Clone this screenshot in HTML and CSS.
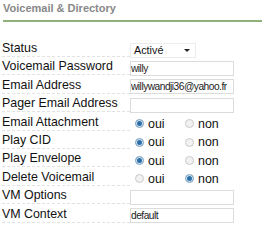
FILE: index.html
```html
<!DOCTYPE html>
<html lang="fr">
<head>
    <meta charset="UTF-8">
    <title>Voicemail &amp; Directory</title>
    <link rel="stylesheet" href="styles.css">
</head>
<body>

    <h3 class="section-title">Voicemail &amp; Directory</h3>

    <form class="vm-form">
        <div class="row">
            <label class="field-label">Status</label>
            <div class="field">
                <div class="select-box">
                    <span>Activé</span>
                    <span class="caret"></span>
                </div>
            </div>
        </div>
        <div class="row">
            <label class="field-label">Voicemail Password</label>
            <div class="field"><input type="text" class="text-input" value="willy"></div>
        </div>
        <div class="row">
            <label class="field-label">Email Address</label>
            <div class="field"><input type="text" class="text-input" value="willywandji36@yahoo.fr"></div>
        </div>
        <div class="row">
            <label class="field-label">Pager Email Address</label>
            <div class="field"><input type="text" class="text-input" value=""></div>
        </div>
        <div class="row">
            <label class="field-label">Email Attachment</label>
            <div class="field radios">
                <span class="opt"><span class="radio on"></span>oui</span>
                <span class="opt"><span class="radio"></span>non</span>
            </div>
        </div>
        <div class="row">
            <label class="field-label">Play CID</label>
            <div class="field radios">
                <span class="opt"><span class="radio on"></span>oui</span>
                <span class="opt"><span class="radio"></span>non</span>
            </div>
        </div>
        <div class="row">
            <label class="field-label">Play Envelope</label>
            <div class="field radios">
                <span class="opt"><span class="radio on"></span>oui</span>
                <span class="opt"><span class="radio"></span>non</span>
            </div>
        </div>
        <div class="row">
            <label class="field-label">Delete Voicemail</label>
            <div class="field radios">
                <span class="opt"><span class="radio"></span>oui</span>
                <span class="opt"><span class="radio on"></span>non</span>
            </div>
        </div>
        <div class="row">
            <label class="field-label">VM Options</label>
            <div class="field"><input type="text" class="text-input" value=""></div>
        </div>
        <div class="row">
            <label class="field-label">VM Context</label>
            <div class="field"><input type="text" class="text-input" value="default"></div>
        </div>
    </form>

</body>
</html>
```

FILE: styles.css
```css
body { margin: 0; padding: 2px; font-family: "Liberation Sans", Arial, sans-serif; background: #fff; color: #111; }
.section-title { margin: 0 0 0 1px; font-size: 11px; font-weight: bold; color: #888; padding-bottom: 6px; border-bottom: 2px solid #8fb27a; }
.vm-form { margin-top: 19px; }
.row { display: flex; align-items: center; height: 18.4px; }
.field-label { width: 128px; font-size: 12.4px; line-height: 15px; color: #111; border-bottom: 1px dashed #e2e2e2; align-self: flex-start; }
.field { display: flex; align-items: center; }
.text-input { width: 104px; height: 15px; box-sizing: border-box; padding: 0; border: 1px solid #dcdcdc; font-family: inherit; font-size: 10.2px; letter-spacing: -0.5px; color: #222; outline: none; }
.select-box { width: 66px; height: 15px; box-sizing: border-box; border: 1px solid #ececec; display: flex; align-items: center; justify-content: space-between; padding: 0 5px 0 3px; font-size: 10.8px; }
.caret { width: 0; height: 0; border-left: 3px solid transparent; border-right: 3px solid transparent; border-top: 3px solid #222; }
.radios { font-size: 12.4px; }
.opt { display: flex; align-items: center; width: 50px; }
.radio { width: 9px; height: 9px; box-sizing: border-box; border-radius: 50%; border: 1px solid #c9c9c9; background: #f2f2f2; margin: 0 4px 0 5px; }
.radio.on { background: #2a6fa8; border-color: #9ab7cf; box-shadow: inset 0 0 0 1px #dbe7f1; }
```
